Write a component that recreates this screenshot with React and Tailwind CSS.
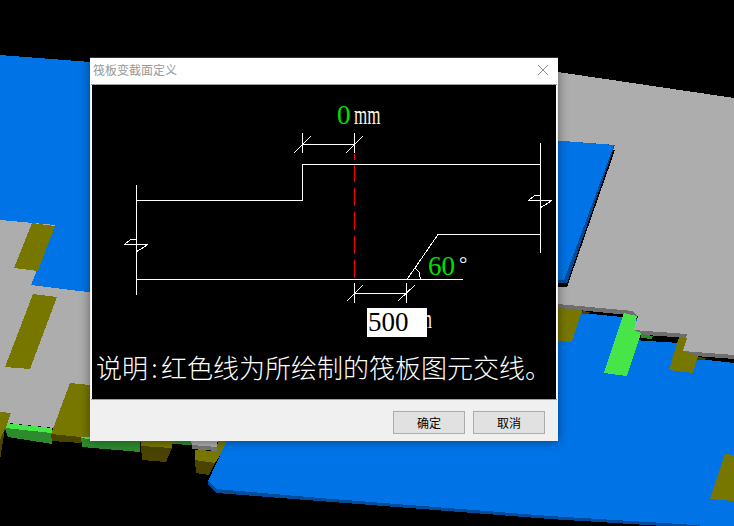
const CJK = "font-['Noto_Sans_CJK_SC','Microsoft_YaHei',sans-serif]"

// background model, page coordinates
const SHAPES = [
  // top blue plate, left
  ['#0073e6', '0,55 90,62 200,70 200,293 90,293 31,285 55,225 0,220'],
  // gray plate, left
  ['#adadad', '0,220 55,225 31,285 120,296 120,440 80,428 55,428 8,423 0,412'],
  ['#777700', '32,223 55,226 38,271 14,268'],
  ['#777700', '33,294 57,297 30,369 5,367'],
  // green strip, left
  ['#2d8a2d', '5,428 52,433 52,444 8,437'],
  ['#2d8a2d', '81,436 140,436 140,452 82,447'],
  ['#2d8a2d', '172,436 192,436 192,445 172,444'],
  ['#48e548', '5,423 52,428 52,433 5,428'],
  ['#48e548', '80,432 110,436 110,441 80,438'],
  ['#777700', '70,383 100,386 100,437 81,437 51,434'],
  ['#4a4400', '51,434 81,437 81,443 52,441'],
  ['#777700', '0,412 11,413 5,430 0,440'],
  ['#4a4400', '5,428 0,460 0,440'],
  // little blocks under the dialog
  ['#777700', '140,438 173,438 172,448 141,446'],
  ['#4a4400', '141,446 172,448 166,462 142,460'],
  ['#777700', '218,438 232,438 215,463 195,460 195,450 217,451'],
  ['#adadad', '190,438 218,438 217,447 192,445'],
  ['#777777', '192,445 217,447 217,451 192,449'],
  ['#4a4400', '195,460 215,463 209,475 196,473'],
  // big blue plate, lower right
  ['#004c99', '232,430 208,481 208,485 216,493 320,501 550,519 680,527 734,531 734,300 300,300'],
  ['#0073e6', '232,430 208,481 216,489 320,498 550,516 680,524 734,528 734,300 300,300'],
  // gray plate, right, with its black and dark gray lower edge
  ['#000000', '582,300 582,313 632,318 640,320 633,340 680,343 698,359 734,363 734,300'],
  ['#6e6e6e', '500,60 558,72 734,98 734,359 683,355 687,338 633,334 638,316 558,308 500,304'],
  ['#adadad', '500,60 558,72 734,98 734,355 683,351 687,334 633,330 638,317 633,311 558,304 500,300'],
  // blue plate showing through at the top right
  ['#000000', '500,136 615,150 567,287 558,287 500,285'],
  ['#004c99', '500,136 615,145 567,283 558,283 500,280'],
  ['#0073e6', '500,136 614,145 564,280 500,276'],
  ['#777700', '558,308 582,310 572,342 558,341'],
  ['#4a4400', '582,311 590,312 589,314 582,314'],
  ['#2d8a2d', '641,334 653,336 652,339 641,338'],
  ['#48e548', '624,313 637,316 634,330 641,333 627,376 604,373'],
  ['#777700', '679,337 687,338 683,351 698,356 693,373 669,370'],
  ['#4a4400', '698,357 706,358 705,360 697,360'],
  ['#777700', '725,454 734,455 734,501 710,499'],
]

// section drawing, page coordinates
const WHITE_LINES = [
  'M136.5 185V295', 'M136.5 200.5H302.5V164.5H540.5', 'M540.5 143V253', 'M136.5 279.5H463',
  'M407 279.5L438 234.5H540.5', 'M302.5 133V153', 'M354.5 133V153', 'M302.5 144.5H354.5',
  'M354.5 283V303', 'M406.5 283V303', 'M354.5 293.5H406.5',
  'M294 153L311 136', 'M346 153L363 136', 'M347 301L363 285', 'M398 301L415 285',
  'M528 200.5H552', 'M528 200.5L535 195.5H540', 'M552 200.5L540 208',
  'M124 244.5H148', 'M124 244.5L131 239.5H136', 'M148 244.5L136 252',
  'M415 268L419 272L420.5 279',
]

function SerifText({ className, children }) {
  return (
    <span className={`absolute font-['Liberation_Serif',serif] text-[27px] leading-[30px] whitespace-nowrap ${className}`}>
      {children}
    </span>
  )
}

function DialogButton({ children }) {
  return (
    <button className={`w-[72px] h-[23px] bg-[#e1e1e1] border border-[#adadad] text-[12px] leading-none text-black ${CJK}`}>
      {children}
    </button>
  )
}

export default function App() {
  return (
    <div className="relative w-[734px] h-[526px] bg-black overflow-hidden">
      <svg className="absolute inset-0" width="734" height="526" viewBox="0 0 734 526" shapeRendering="crispEdges">
        {SHAPES.map(([fill, points], i) => (
          <polygon key={i} fill={fill} points={points} />
        ))}
      </svg>

      <div className="absolute left-[90px] top-[57px] w-[468px] h-[384px] flex flex-col bg-[#f0f0f0] border-t border-[#333333] shadow-[0_0_10px_rgba(0,0,0,0.45)]">
        <div className="h-[26px] shrink-0 bg-white flex items-center justify-between pl-[3px] pr-[9px] pb-[2px]">
          <span className={`text-[12px] leading-none text-[#999999] ${CJK}`}>筏板变截面定义</span>
          <svg width="12" height="12" viewBox="0 0 12 12" stroke="#8c8c8c" fill="none">
            <path d="M1 1L11 11M11 1L1 11" />
          </svg>
        </div>

        <div className="h-[316px] shrink-0 bg-white border-y border-[#a0a0a0] mx-px px-px">
          <div className="relative h-full bg-black overflow-hidden">
            <svg className="absolute inset-0" width="464" height="313" viewBox="92 85 464 313" fill="none" shapeRendering="crispEdges">
              <path d="M354.5 154V160M354.5 164V278" stroke="#ff0000" strokeDasharray="18 6" />
              {WHITE_LINES.map(d => <path key={d} d={d} stroke="#ffffff" />)}
            </svg>

            <SerifText className="left-[245px] top-[15px] text-[#00e000]">0</SerifText>
            <SerifText className="left-[262px] top-[15px] text-[#fff6e0] origin-left scale-x-[0.63]">mm</SerifText>
            <SerifText className="left-[336px] top-[166px] text-[#00e000]">60</SerifText>
            <SerifText className="left-[367px] top-[164px] !text-[21px] text-[#e8f4ff]">°</SerifText>
            <div className="absolute left-[275px] top-[223px] w-[60px] h-[29px] bg-white">
              <span className="block pl-px font-['Liberation_Serif',serif] text-[27px] leading-[29px] text-black">500</span>
            </div>
            <div className="absolute left-[335px] top-[219px] w-[5px] h-[30px] overflow-hidden">
              <SerifText className="right-0 top-0 text-[#fff6e0] origin-right scale-x-[0.63]">m</SerifText>
            </div>

            <p className={`absolute left-[4px] top-[265px] text-[26px] leading-[34px] font-light text-white whitespace-nowrap ${CJK}`}>
              说明<span className="inline-block w-[13px] text-center">:</span>红色线为所绘制的筏板图元交线。
            </p>
          </div>
        </div>

        <div className="flex-1 flex justify-end items-start gap-2 pt-[11px] pr-[13px]">
          <DialogButton>确定</DialogButton>
          <DialogButton>取消</DialogButton>
        </div>
      </div>
    </div>
  )
}
